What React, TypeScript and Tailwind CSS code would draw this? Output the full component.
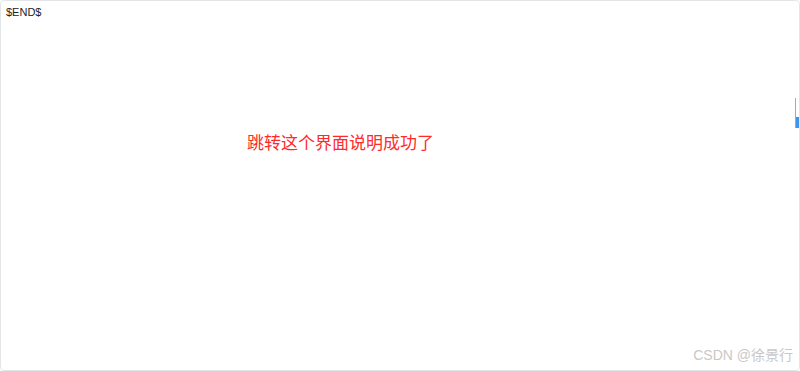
import React from 'react';

export default function App() {
  return (
    <div className="relative h-[371px] w-[800px] overflow-hidden rounded-[4px] border border-[#e3e6e8] bg-white font-['Noto_Sans_CJK_SC',sans-serif]">
      <div className="pl-[5px] pt-[3px] text-[11px] leading-[16px] text-[#222] font-['Liberation_Sans','Noto_Sans_CJK_SC',sans-serif]">
        $END$
      </div>
      <div className="pl-[246px] pt-[111px] text-[17px] leading-[22px] text-[#ff2a2a]">
        跳转这个界面说明成功了
      </div>
      {/* thin widget stub at the right edge */}
      <div className="absolute right-0 top-[97px] flex h-[30px] w-[4px]">
        <div className="w-[1px] bg-[#a8a8a8]" />
        <div className="flex w-[3px] flex-col justify-end">
          <div className="h-[11px] bg-[#3d95f0]" />
        </div>
      </div>
      <div className="absolute bottom-[6px] right-[6px] text-[14px] leading-[18px] text-[#c8c8c8] font-['Liberation_Sans','Noto_Sans_CJK_SC',sans-serif]">
        CSDN @徐景行
      </div>
    </div>
  );
}
